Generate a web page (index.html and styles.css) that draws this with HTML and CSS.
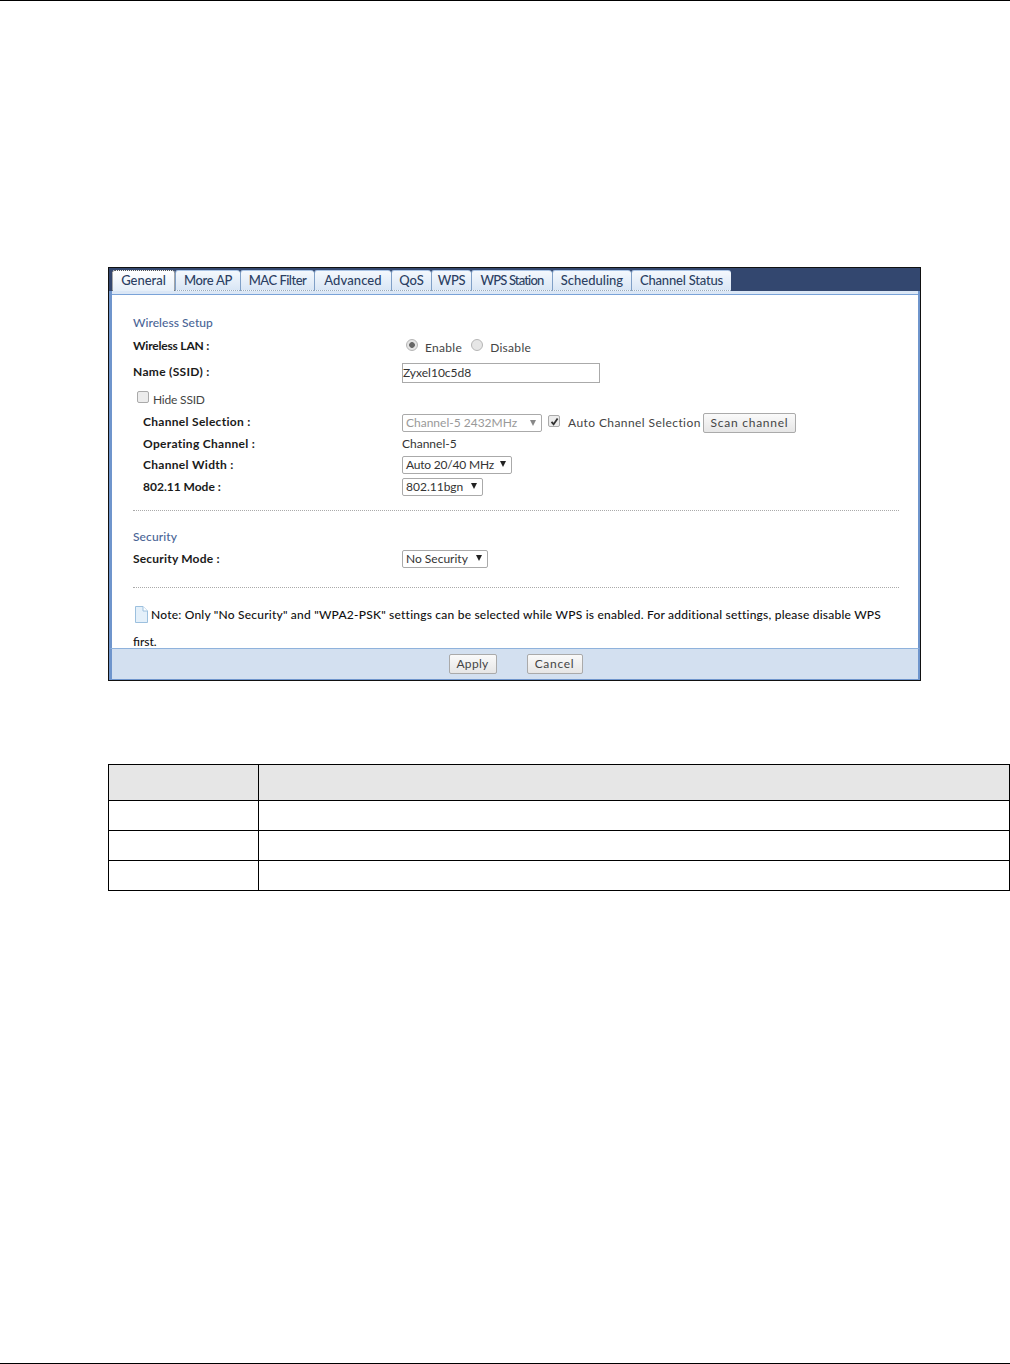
FILE: index.html
```html
<!DOCTYPE html>
<html lang="en">
<head>
<meta charset="utf-8">
<title>Wireless General</title>
<link rel="stylesheet" href="styles.css">
</head>
<body>
<div class="page">
  <div class="shot">
    <nav class="tabs">
      <span class="tab active t1">General</span>
      <span class="tab t2">More AP</span>
      <span class="tab t3">MAC Filter</span>
      <span class="tab t4">Advanced</span>
      <span class="tab t5">QoS</span>
      <span class="tab t6">WPS</span>
      <span class="tab t7">WPS Station</span>
      <span class="tab t8">Scheduling</span>
      <span class="tab t9">Channel Status</span>
    </nav>
    <div class="content">
      <h3 class="section s1">Wireless Setup</h3>
      <div class="row r-lan">
        <span class="lbl">Wireless LAN :</span>
        <span class="val">
          <span class="radio on"></span><span class="opt o1">Enable</span>
          <span class="radio"></span><span class="opt">Disable</span>
        </span>
      </div>
      <div class="row r-name">
        <span class="lbl">Name (SSID) :</span>
        <span class="val"><span class="input">Zyxel10c5d8</span></span>
      </div>
      <div class="row r-hide">
        <span class="check"></span><span class="opt hide">Hide SSID</span>
      </div>
      <div class="row sub r-sel">
        <span class="lbl">Channel Selection :</span>
        <span class="val">
          <span class="select dis w-ch">Channel-5 2432MHz<i class="arrow"></i></span>
          <span class="check on"><svg viewBox="0 0 11 11" width="11" height="11"><path d="M2.5 5.8 4.6 8.2 8.6 2.6" fill="none" stroke="#333" stroke-width="1.8"/></svg></span>
          <span class="opt auto">Auto Channel Selection</span>
          <span class="btn scan">Scan channel</span>
        </span>
      </div>
      <div class="row sub r-op">
        <span class="lbl">Operating Channel :</span>
        <span class="val plain">Channel-5</span>
      </div>
      <div class="row sub r-w">
        <span class="lbl">Channel Width :</span>
        <span class="val"><span class="select w-wd">Auto 20/40 MHz<i class="arrow"></i></span></span>
      </div>
      <div class="row sub r-m">
        <span class="lbl">802.11 Mode :</span>
        <span class="val"><span class="select w-md">802.11bgn<i class="arrow"></i></span></span>
      </div>
      <hr class="dots d1">
      <h3 class="section s2">Security</h3>
      <div class="row r-sec">
        <span class="lbl">Security Mode :</span>
        <span class="val"><span class="select w-sc">No Security<i class="arrow"></i></span></span>
      </div>
      <hr class="dots d2">
      <p class="note"><svg class="page-ic" viewBox="0 0 14 17" width="14" height="17"><path d="M1.5.5H9L13.5 5V16.5H1.5Z" fill="#e4f0fa" stroke="#9cc0de"/><path d="M9 .5V5H13.5" fill="#fff" stroke="#9cc0de"/></svg><span>Note: Only "No Security" and "WPA2-PSK" settings can be selected while WPS is enabled. For additional settings, please disable WPS</span></p>
      <p class="first">first.</p>
    </div>
    <div class="foot">
      <span class="btn apply">Apply</span>
      <span class="btn cancel">Cancel</span>
    </div>
  </div>
  <table class="grid">
    <tr class="head"><td class="c1"></td><td></td></tr>
    <tr><td class="c1"></td><td></td></tr>
    <tr><td class="c1"></td><td></td></tr>
    <tr><td class="c1"></td><td></td></tr>
  </table>
</div>
</body>
</html>
```
FILE: styles.css
```css
* { box-sizing: border-box; }
html, body { margin: 0; padding: 0; background: #fff; }
body { height: 1364px; overflow: hidden; }
.page {
  height: 1364px;
  border-top: 1px solid #000;
  border-bottom: 1px solid #000;
  padding: 266px 0 0 108px;
  font-family: "Lato", "Liberation Sans", sans-serif;
  font-size: 12px;
  color: #222;
}
.shot {
  width: 813px;
  height: 414px;
  border: 1px solid #111;
  display: flex;
  flex-direction: column;
  background: #fff;
}
.tabs {
  height: 23px;
  flex: none;
  display: flex;
  align-items: flex-end;
  background: #33476f;
  border-left: 3px solid #33476f;
}
.tab {
  height: 21px;
  background: linear-gradient(#f4f8fd, #d9e6f5);
  border-left: 1px solid #7f9fc6;
  border-top: 1px solid #a9c3e4;
  border-bottom: 1px dotted #9ab;
  border-radius: 3px 3px 0 0;
  color: #2c3f63;
  font-size: 13px;
  line-height: 18px;
  text-align: center;
  font-weight: 500;
}
.tab.active {
  background: linear-gradient(#fff, #e6eff9);
  border: 1px dotted #555;
  border-bottom: 0;
}
.t1 { width: 63px; }
.t2 { width: 65px; letter-spacing: -.3px; }
.t3 { width: 74px; letter-spacing: -.5px; }
.t4 { width: 77px; letter-spacing: .1px; }
.t5 { width: 40px; }
.t6 { width: 40px; letter-spacing: -.3px; }
.t7 { width: 81px; letter-spacing: -.85px; }
.t8 { width: 79px; }
.t9 { width: 100px; letter-spacing: -.2px; }
.content {
  flex: 1;
  min-height: 0;
  border: solid #6f95cc;
  border-width: 0 2px 0 3px;
  box-shadow: inset 0 3px 0 #dbe7f6, inset 0 4px 0 #7aa3d8;
  padding: 0 19px 0 21px;
  overflow: hidden;
}
.section {
  margin: 0;
  font-size: 12px;
  font-weight: 500;
  color: #4a6596;
  line-height: 16px;
}
.s1 { margin-top: 24px; letter-spacing: .05px; }
.s2 { margin-top: 18px; letter-spacing: .1px; }
.row { display: flex; align-items: center; line-height: 16px; }
.sub { padding-left: 10px; }
.lbl { width: 269px; flex: none; font-weight: 700; color: #1a1a1a; letter-spacing: .3px; }
.sub .lbl { width: 259px; }
.r-lan .lbl { letter-spacing: -.2px; }
.r-m .lbl { letter-spacing: 0; }
.r-sec .lbl { letter-spacing: .2px; }
.val { display: flex; align-items: center; }
.plain { color: #333; }
.r-lan { height: 22px; margin-top: 4px; }
.r-name { height: 24px; margin-top: 3px; }
.r-hide { height: 20px; margin-top: 4px; padding-left: 4px; }
.r-sel { height: 22px; margin-top: 4px; }
.r-sel .lbl { margin-bottom: 2px; }
.r-op { height: 22px; margin-top: -1px; }
.r-w { height: 20px; }
.r-m { height: 22px; margin-top: 1px; }
.r-sec { height: 22px; margin-top: 3px; }
.radio {
  width: 12px; height: 12px; border-radius: 50%;
  border: 1px solid #b5b5b5;
  background: radial-gradient(circle, #e6e6e6 0 70%, #f5f5f5);
  margin: 0 7px 2px 4px;
  flex: none;
}
.radio.on { background: radial-gradient(circle, #666 0 2.5px, #e4e4e4 3.2px); }
.opt { color: #444; padding-top: 3px; letter-spacing: .3px; }
.o1 { margin-right: 5px; }
.hide { letter-spacing: -.2px; }
.check {
  width: 12px; height: 12px; border: 1px solid #aaa; border-radius: 2px;
  background: #ececec; flex: none; margin-right: 4px; margin-bottom: 2px;
  display: flex; align-items: center; justify-content: center;
}
.check.on { margin: 0 8px 4px 6px; }
.check svg { flex: none; }
.input {
  display: block; width: 198px; height: 20px;
  border: 1px solid #aaa; line-height: 18px; padding-left: 0;
  color: #333;
  margin-top: 2px;
}
.select {
  display: flex; align-items: center;
  height: 18px; border: 1px solid #aaa; border-radius: 2px;
  padding-left: 3px; color: #333; background: #fff; position: relative;
  white-space: nowrap;
}
.select.dis { color: #999; }
.arrow {
  position: absolute; right: 5px; top: 4px;
  width: 0; height: 0;
  border-left: 3px solid transparent; border-right: 3px solid transparent;
  border-top: 6px solid #222;
}
.dis .arrow { border-top-color: #888; top: 5px; }
.w-ch { width: 140px; }
.w-wd { width: 110px; letter-spacing: -.2px; }
.w-md { width: 81px; }
.w-sc { width: 86px; }
.auto { padding-top: 0; width: 135px; white-space: nowrap; letter-spacing: .42px; }
.btn {
  display: inline-block;
  height: 20px;
  border: 1px solid #aaa;
  border-radius: 2px;
  background: linear-gradient(#fafafa, #e6e6e6);
  text-align: center;
  line-height: 18px;
  color: #444;
}
.scan { width: 93px; letter-spacing: .75px; }
.dots { border: 0; border-top: 1px dotted #aaa; margin: 0; }
.d1 { margin-top: 12px; }
.d2 { margin-top: 17px; }
.note { margin: 18px 0 0; display: flex; align-items: center; height: 17px; color: #111; font-weight: 500; white-space: nowrap; letter-spacing: .21px; }
.page-ic { flex: none; margin: 0 3px 0 1px; }
.first { margin: 13px 0 0; color: #111; font-weight: 500; line-height: 12px; }
.foot {
  height: 32px;
  flex: none;
  background: #d3e0f0;
  border-top: 1px solid #8fb2dc;
  border-left: 3px solid #6f95cc;
  border-right: 2px solid #6f95cc;
  border-bottom: 1px solid #6f95cc;
  display: flex;
  justify-content: center;
  align-items: center;
  gap: 30px;
  padding-left: 1px;
}
.apply { width: 48px; letter-spacing: .3px; }
.cancel { width: 56px; letter-spacing: .7px; }
.grid {
  margin-top: 83px;
  width: 902px;
  height: 127px;
  border-collapse: collapse;
  table-layout: fixed;
}
.grid td { border: 1px solid #000; padding: 0; height: 30px; }
.grid .c1 { width: 150px; }
.grid .head td { background: #e6e6e6; height: 36px; }
```
